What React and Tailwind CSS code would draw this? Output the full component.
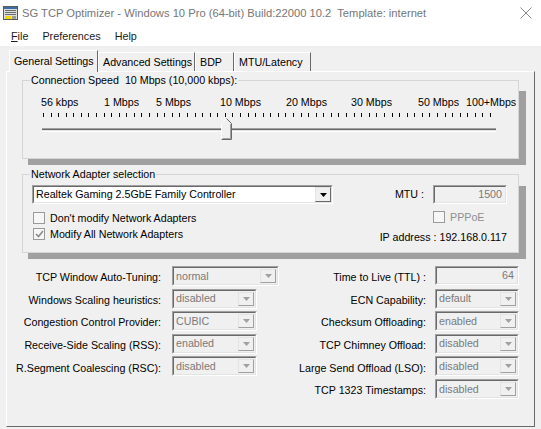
import React from "react";

const FONT = "font-['Liberation_Sans',Arial,sans-serif]";

function Combo({ value, w = "w-[85px]" }) {
  return (
    <div className={`${w} h-[20px] border border-t-[#a0a0a0] border-l-[#a0a0a0] border-r-white border-b-white`}>
      <div className="h-full flex items-center border border-t-[#696969] border-l-[#696969] border-r-[#e3e3e3] border-b-[#e3e3e3] bg-[#f0f0f0]">
        <span className="flex-1 pl-[2px] text-[#7a7a7a] leading-none">{value}</span>
        <div className="w-[16px] h-[14px] mr-[1px] flex items-center justify-center border border-t-[#e3e3e3] border-l-[#e3e3e3] border-r-[#a0a0a0] border-b-[#a0a0a0] bg-[#f0f0f0]">
          <svg width="7" height="4" viewBox="0 0 7 4"><path d="M0 0h7L3.5 4z" fill="#a0a0a0" /></svg>
        </div>
      </div>
    </div>
  );
}

function Field({ value, w = "w-[84px]" }) {
  return (
    <div className={`${w} h-[19px] border border-t-[#a0a0a0] border-l-[#a0a0a0] border-r-white border-b-white`}>
      <div className="h-full flex items-center justify-end pr-[3px] border border-t-[#696969] border-l-[#696969] border-r-[#e3e3e3] border-b-[#e3e3e3] bg-[#f0f0f0] text-[#7a7a7a] leading-none">
        {value}
      </div>
    </div>
  );
}

function Check({ checked, disabled, label }) {
  return (
    <div className="flex items-center gap-[5px] h-[16px] whitespace-nowrap">
      <div className="w-[12px] h-[12px] shrink-0 border border-[#9a9a9a] bg-[#f6f6f6] flex items-center justify-center">
        {checked && (
          <svg width="9" height="8" viewBox="0 0 9 8">
            <path d="M1 4l2.5 2.5L8 1" stroke="#8a8a8a" strokeWidth="1.6" fill="none" />
          </svg>
        )}
      </div>
      <span className={disabled ? "text-[#8f8f8f]" : "text-black"}>{label}</span>
    </div>
  );
}

function Group({ title, children, boxClass, shadowTop }) {
  return (
    <div className="relative">
      <div className={`absolute left-[6px] -right-[7px] -bottom-[6px] bg-[#a0a0a0] ${shadowTop}`} />
      <div className={`relative border border-[#d5d5d5] bg-[#f0f0f0] ${boxClass}`}>
        <span className="absolute -top-[8px] left-[7px] px-[1px] bg-[#f0f0f0] leading-[14px] whitespace-pre">{title}</span>
        {children}
      </div>
    </div>
  );
}

const labels = [
  ["56 kbps", "w-[63px]"],
  ["1 Mbps", "w-[52px]"],
  ["5 Mbps", "w-[64px]"],
  ["10 Mbps", "w-[66px]"],
  ["20 Mbps", "w-[65px]"],
  ["30 Mbps", "w-[67px]"],
  ["50 Mbps", "w-[48px]"],
  ["100+Mbps", "w-auto"],
];

function Slider() {
  const ticks = [];
  const n = 59;
  const x0 = 20, x1 = 467;
  for (let i = 0; i <= n; i++) {
    const x = Math.round(x0 + ((x1 - x0) * i) / n) + 0.5;
    ticks.push(<line key={i} x1={x} x2={x} y1="0" y2="4" stroke="#000" strokeWidth="1" />);
  }
  return (
    <svg width="495" height="50" viewBox="0 0 495 50" className="block">
      {ticks}
      <rect x="19" y="15" width="454" height="1" fill="#a0a0a0" />
      <rect x="19" y="16" width="454" height="1" fill="#696969" />
      <rect x="19" y="17" width="454" height="1" fill="#e3e3e3" />
      <rect x="19" y="18" width="454" height="1" fill="#ffffff" />
      <path d="M198.5 26.5V10.5L203.5 5.5L208.5 10.5V26.5Z" fill="#f0f0f0" stroke="#ffffff" strokeWidth="1" />
      <path d="M208.5 10.5V26.5H198.5" fill="none" stroke="#696969" strokeWidth="1" />
      <path d="M199.5 25.5H207.5V11" fill="none" stroke="#a0a0a0" strokeWidth="1" />
      <path d="M203.5 5.5L208.5 10.5" fill="none" stroke="#696969" strokeWidth="1" />
    </svg>
  );
}

function Tab({ label, w, selected }) {
  if (selected) {
    return (
      <div className={`${w} h-[22px] -mb-[1px] relative z-[1] bg-[#f0f0f0] border-t border-l border-white border-r border-r-[#696969] pl-[4px] pt-[3px] leading-[14px] whitespace-nowrap`}>
        {label}
      </div>
    );
  }
  return (
    <div className={`${w} h-[19px] bg-[#f0f0f0] border-t border-l border-white border-r border-r-[#696969] pl-[4px] pt-[2px] leading-[14px] whitespace-nowrap`}>
      {label}
    </div>
  );
}

function L({ children }) {
  return <div className="flex justify-end items-center whitespace-nowrap">{children}</div>;
}

export default function App() {
  return (
    <div className={`w-[541px] h-[429px] bg-[#f0f0f0] overflow-hidden flex flex-col text-[10.7px] text-black ${FONT}`}>
      {/* Title bar */}
      <div className="h-[26px] shrink-0 bg-white flex items-center pl-[3px] pr-[9px]">
        <svg width="15" height="14" viewBox="0 0 15 14">
          <rect x="0.5" y="0.5" width="14" height="13" fill="#dcdcdc" stroke="#5a5a5a" />
          <rect x="1" y="1" width="13" height="2" fill="#3a6ea5" />
          <rect x="2" y="4" width="11" height="1" fill="#6b6b6b" />
          <rect x="2" y="6" width="11" height="1" fill="#6b6b6b" />
          <rect x="2" y="8" width="11" height="1" fill="#6b6b6b" />
          <rect x="2" y="10" width="6" height="3" fill="#f2d600" />
          <rect x="9" y="10" width="4" height="3" fill="#9a9a9a" />
        </svg>
        <span className="ml-[4px] text-[11.2px] text-[#767676] whitespace-pre">
          SG TCP Optimizer - Windows 10 Pro (64-bit) Build:22000 10.2  Template: internet
        </span>
        <svg className="ml-auto" width="12" height="12" viewBox="0 0 12 12">
          <path d="M0.5 0.5L11.5 11.5M11.5 0.5L0.5 11.5" stroke="#8a8a8a" strokeWidth="1" />
        </svg>
      </div>
      {/* Menu */}
      <div className="h-[20px] shrink-0 bg-white flex items-center pl-[11px] gap-[14px] text-[10.8px] text-[#1a1a1a]">
        <span><span className="underline">F</span>ile</span>
        <span>Preferences</span>
        <span>Help</span>
      </div>
      {/* Tabs */}
      <div className="mt-[4px] flex items-end pl-[9px] h-[21px] shrink-0">
        <Tab label="General Settings" w="w-[89px]" selected />
        <Tab label="Advanced Settings" w="w-[97px]" />
        <Tab label="BDP" w="w-[39px]" />
        <Tab label="MTU/Latency" w="w-[77px]" />
      </div>
      {/* Panel */}
      <div className="ml-[6px] w-[529px] h-[356px] shrink-0 border border-t-white border-l-white border-r-[#696969] border-b-[#696969] flex flex-col pl-[15px] pr-[15px] pt-[8px]">
        <Group title="Connection Speed  10 Mbps (10,000 kbps):" boxClass="h-[79px]" shadowTop="top-[11px]">
          <div className="flex pt-[15px] ml-[18px] leading-[13px] whitespace-nowrap">
            {labels.map(([t, w]) => (
              <span key={t} className={`${w} shrink-0`}>{t}</span>
            ))}
          </div>
          <div className="mt-[4px]">
            <Slider />
          </div>
        </Group>

        <div className="mt-[15px]">
          <Group title="Network Adapter selection" boxClass="h-[79px]" shadowTop="top-[12px]">
            <div className="flex pl-[9px] pr-[11px] pt-[10px]">
              <div className="flex flex-col">
                <div className="w-[301px] h-[19px] border border-t-[#a0a0a0] border-l-[#a0a0a0] border-r-white border-b-white">
                  <div className="h-full flex items-center bg-white border border-t-[#696969] border-l-[#696969] border-r-[#e3e3e3] border-b-[#e3e3e3]">
                    <span className="flex-1 pl-[2px] leading-none whitespace-nowrap">Realtek Gaming 2.5GbE Family Controller</span>
                    <div className="w-[16px] h-[15px] flex items-center justify-center border border-t-[#e3e3e3] border-l-[#e3e3e3] border-r-[#696969] border-b-[#696969] bg-[#f0f0f0]">
                      <svg width="7" height="4" viewBox="0 0 7 4"><path d="M0 0h7L3.5 4z" fill="#000" /></svg>
                    </div>
                  </div>
                </div>
                <div className="mt-[6px] pl-[1px]">
                  <Check label="Don't modify Network Adapters" />
                </div>
                <div className="pl-[1px]">
                  <Check checked label="Modify All Network Adapters" />
                </div>
              </div>
              <div className="ml-auto flex flex-col items-end">
                <div className="flex items-center whitespace-nowrap">
                  <span className="mr-[9px]">MTU :</span>
                  <Field value="1500" w="w-[74px]" />
                </div>
                <div className="mt-[5px] w-[74px]">
                  <Check disabled label="PPPoE" />
                </div>
                <div className="mt-[5px] leading-[14px] whitespace-nowrap">IP address : 192.168.0.117</div>
              </div>
            </div>
          </Group>
        </div>

        {/* Lower area */}
        <div className="flex mt-[13px]">
          <div className="grid grid-cols-[143px_auto] gap-x-[11px] auto-rows-[22.6px] -ml-[4px]">
            <L>TCP Window Auto-Tuning:</L>
            <Combo value="normal" w="w-[107px]" />
            <L>Windows Scaling heuristics:</L>
            <Combo value="disabled" />
            <L>Congestion Control Provider:</L>
            <Combo value="CUBIC" />
            <L>Receive-Side Scaling (RSS):</L>
            <Combo value="enabled" />
            <L>R.Segment Coalescing (RSC):</L>
            <Combo value="disabled" />
          </div>
          <div className="ml-auto grid grid-cols-[auto_84px] gap-x-[9px] auto-rows-[22.6px]">
            <L>Time to Live (TTL) :</L>
            <Field value="64" />
            <L>ECN Capability:</L>
            <Combo value="default" w="w-[84px]" />
            <L>Checksum Offloading:</L>
            <Combo value="enabled" w="w-[84px]" />
            <L>TCP Chimney Offload:</L>
            <Combo value="disabled" w="w-[84px]" />
            <L>Large Send Offload (LSO):</L>
            <Combo value="disabled" w="w-[84px]" />
            <L>TCP 1323 Timestamps:</L>
            <Combo value="disabled" w="w-[84px]" />
          </div>
        </div>
      </div>
    </div>
  );
}
